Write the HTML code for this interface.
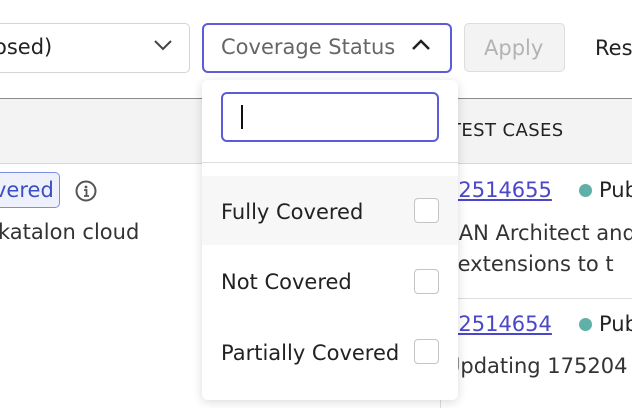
<!DOCTYPE html>
<html><head><style>
body{margin:0;width:632px;height:408px;overflow:hidden;background:#fff;font-family:"DejaVu Sans","Liberation Sans",sans-serif;position:relative;color:#222}
.a{position:absolute;white-space:nowrap}
.t{font-size:21px}
</style></head><body>
<div class="a" style="left:-10px;top:23px;width:198px;height:48px;border:1px solid #d4d4d4;border-radius:5px"></div>
<div class="a t" style="left:-6px;top:35px;color:#222">osed)</div>
<svg class="a" style="left:152px;top:38px" width="22" height="14"><path d="M3 3l8 8 8-8" fill="none" stroke="#444" stroke-width="2"/></svg>
<div class="a" style="left:202px;top:23px;width:246px;height:46px;border:2px solid #5b5bdc;border-radius:6px"></div>
<div class="a t" style="left:221px;top:35px;color:#666">Coverage Status</div>
<svg class="a" style="left:410px;top:38px" width="22" height="14"><path d="M3 11l8-8 8 8" fill="none" stroke="#222" stroke-width="2.5"/></svg>
<div class="a" style="left:464px;top:23px;width:99px;height:47px;border:1px solid #ddd;border-radius:5px;background:#f3f3f3"></div>
<div class="a t" style="left:484px;top:36px;color:#b3b3b3">Apply</div>
<div class="a t" style="left:595px;top:36px;color:#222">Res</div>
<div class="a" style="left:0;top:98px;width:632px;height:64px;background:#f3f3f3;border-top:1px solid #8a8a8a;border-bottom:1px solid #d8d8d8"></div>
<div class="a" style="left:450px;top:120px;font-size:18px;color:#222;letter-spacing:0.4px">TEST CASES</div>
<div class="a" style="left:440px;top:163px;width:1px;height:245px;background:#ddd"></div>
<div class="a" style="left:-10px;top:172px;width:68px;height:34px;border:1px solid #7a8fe0;border-radius:5px;background:#eef1fc"></div>
<div class="a t" style="left:-6px;top:178px;color:#3b4fc4">vered</div>
<svg class="a" style="left:75px;top:180px" width="24" height="24"><circle cx="11" cy="11" r="9.5" fill="none" stroke="#555" stroke-width="2"/><circle cx="11" cy="7" r="1.4" fill="#555"/><path d="M9 10h2.5v6M9 16h5" stroke="#555" stroke-width="1.8" fill="none"/></svg>
<div class="a t" style="left:-2px;top:220px;color:#333">katalon cloud</div>
<div class="a t" style="left:445px;top:178px;color:#4b47c9;text-decoration:underline">12514655</div>
<div class="a" style="left:579px;top:184px;width:13px;height:13px;border-radius:50%;background:#5fb0a8"></div>
<div class="a t" style="left:599px;top:178px">Pub</div>
<div class="a t" style="left:445px;top:221px;color:#333">SAN Architect and</div>
<div class="a t" style="left:440px;top:252px;color:#333">s extensions to t</div>
<div class="a" style="left:440px;top:298px;width:192px;height:1px;background:#ddd"></div>
<div class="a t" style="left:445px;top:312px;color:#4b47c9;text-decoration:underline">12514654</div>
<div class="a" style="left:579px;top:318px;width:13px;height:13px;border-radius:50%;background:#5fb0a8"></div>
<div class="a t" style="left:599px;top:312px">Pub</div>
<div class="a t" style="left:445px;top:354px;color:#333">Updating 175204</div>
<div class="a" style="left:202px;top:80px;width:256px;height:320px;background:#fff;border-radius:6px;box-shadow:0 2px 10px rgba(0,0,0,0.15)">
 <div class="a" style="left:19px;top:12px;width:214px;height:46px;border:2px solid #5b5bdc;border-radius:6px"></div>
 <div class="a" style="left:39px;top:25px;width:2px;height:24px;background:#111"></div>
 <div class="a" style="left:0;top:82px;width:256px;height:1px;background:#ddd"></div>
 <div class="a" style="left:0;top:96px;width:256px;height:69px;background:#f7f7f7"></div>
 <div class="a t" style="left:19px;top:120px">Fully Covered</div>
 <div class="a t" style="left:19px;top:190px">Not Covered</div>
 <div class="a t" style="left:19px;top:261px">Partially Covered</div>
 <div class="a" style="left:212px;top:118px;width:23px;height:23px;border:1px solid #c4c4c4;border-radius:4px;background:#fff"></div>
 <div class="a" style="left:212px;top:189px;width:23px;height:23px;border:1px solid #c4c4c4;border-radius:4px;background:#fff"></div>
 <div class="a" style="left:212px;top:259px;width:23px;height:23px;border:1px solid #c4c4c4;border-radius:4px;background:#fff"></div>
</div>
</body></html>
